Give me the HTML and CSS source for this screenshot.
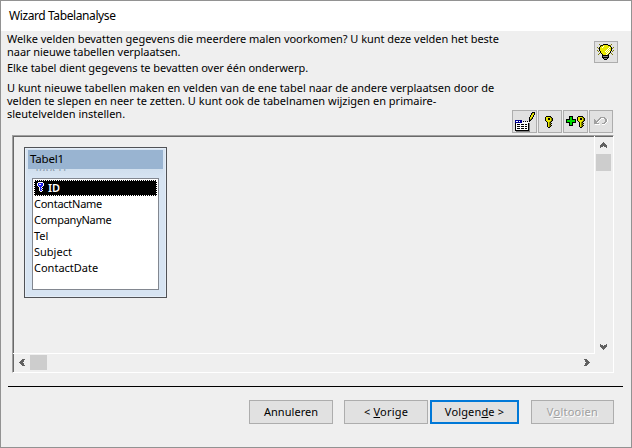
FILE: index.html
```html
<!DOCTYPE html>
<html lang="nl">
<head>
<meta charset="utf-8">
<title>Wizard Tabelanalyse</title>
<link rel="stylesheet" href="styles.css">
</head>
<body>
<div class="window">
  <header class="titlebar">Wizard Tabelanalyse</header>
  <main class="content">
    <section class="intro">
      <div class="copy">
        <p><span class="snug">Welke velden bevatten gegevens die meerdere malen voorkomen? U kunt deze velden het beste</span><br><span class="snug">naar nieuwe tabellen verplaatsen.</span></p>
        <p><span class="snug">Elke tabel dient gegevens te bevatten over één onderwerp.</span></p>
        <p>U kunt nieuwe tabellen maken en velden van de ene tabel naar de andere verplaatsen door de<br>velden te slepen en neer te zetten. U kunt ook de tabelnamen wijzigen en primaire-<br>sleutelvelden instellen.</p>
      </div>
      <div class="tools">
        <button class="tool tip" aria-label="Tip"><svg data-icon="bulb"></svg></button>
        <div class="toolbar">
          <button class="tool wide" aria-label="Naam wijzigen"><svg data-icon="rename"></svg></button>
          <button class="tool key" aria-label="Sleutel"><svg data-icon="key"></svg></button>
          <button class="tool wide" aria-label="Sleutel toevoegen"><svg data-icon="addkey"></svg></button>
          <button class="tool undo" aria-label="Ongedaan maken"><svg data-icon="undo"></svg></button>
        </div>
      </div>
    </section>
    <section class="panel">
      <div class="canvas">
        <div class="table">
          <div class="table-title">Tabel1</div>
          <div class="ghost"><span>Tabel1</span></div>
          <ul class="fields">
            <li class="selected"><svg data-icon="pk"></svg><span>ID</span></li>
            <li class="tight">ContactName</li>
            <li class="tight">CompanyName</li>
            <li>Tel</li>
            <li>Subject</li>
            <li>ContactDate</li>
          </ul>
        </div>
      </div>
      <div class="vscroll"><svg data-icon="up"></svg><i class="thumb"></i><svg class="last" data-icon="down"></svg></div>
      <div class="hscroll"><svg data-icon="left"></svg><i class="thumb"></i><svg class="last" data-icon="right"></svg></div>
    </section>
    <hr>
    <footer class="actions">
      <button class="btn cancel"><span>Annuleren</span></button>
      <button class="btn back"><span>&lt; <u>V</u>orige</span></button>
      <button class="btn next"><span>Volgen<u>d</u>e &gt;</span></button>
      <button class="btn finish" disabled><span>V<u>o</u>ltooien</span></button>
    </footer>
  </main>
</div>
<script src="icons.js"></script>
</body>
</html>
```
FILE: styles.css
```css
* { box-sizing: border-box; }
body {
  margin: 0;
  font: 11px/13px "Noto Sans", "Open Sans", sans-serif;
  color: #000;
}
.window {
  width: 632px;
  height: 448px;
  border: 1px solid #929292;
  background: #efefef;
  overflow: hidden;
}
.titlebar {
  height: 30px;
  padding: 1px 8px 0;
  background: #fff;
  font-size: 12px;
  line-height: 28px;
  letter-spacing: -.4px;
}
.content { display: flex; flex-direction: column; }
.intro { display: flex; height: 104px; }
.copy { width: 511px; padding: 1px 0 0 6px; white-space: nowrap; }
p { margin: 0 0 3px; }
p + p { margin-bottom: 7px; }
.snug { letter-spacing: -.045px; }
.tools { width: 102px; padding-top: 10px; }
button { padding: 0; margin: 0; font: inherit; color: #000; background: #e1e1e1; border: 1px solid #adadad; }
.tool { display: flex; align-items: center; justify-content: center; width: 24px; height: 23px; }
.wide { width: 25px; }
.key { padding-right: 3px; }
.undo { padding: 0 1px 2px 0; }
.tip { height: 22px; margin-left: 82px; padding-right: 1px; }
.toolbar { display: flex; gap: 1px; margin-top: 47px; }
.panel {
  display: grid;
  grid-template: 218px 17px / 582px 18px;
  width: 602px;
  height: 238px;
  margin-left: 11px;
  border: 1px solid;
  border-color: #a0a0a0 #fff #fff #a0a0a0;
  box-shadow: inset 1px 1px #696969;
}
.canvas { padding: 11px 0 0 11px; border: solid #fff; border-width: 0 1px 1px 0; box-shadow: inset 1px 1px #696969; }
.table {
  width: 143px;
  height: 151px;
  padding: 2px 3px;
  border: 1px solid #505256;
  background: #d7e4f2;
  box-shadow: inset 1px 1px #e4edf7, inset -1px -1px #e4edf7;
}
.table-title {
  height: 19px;
  padding-left: 2px;
  background: #99b4d1;
  font-size: 11.5px;
  line-height: 18px;
  letter-spacing: -.2px;
}
.ghost {
  height: 9px;
  padding-left: 6px;
  background: linear-gradient(#d0dfee, #d7e4f2);
}
.ghost span { display: flex; align-items: flex-end; height: 2px; line-height: 7px; overflow: hidden; color: #8f9dad; }
.fields {
  width: 127px;
  height: 112px;
  margin: 0 0 0 4px;
  padding: 1px;
  list-style: none;
  background: #fff;
  border: 1px solid #828790;
  line-height: 15px;
}
.fields li { height: 16px; }
.fields .tight { letter-spacing: -.25px; }
.fields .selected {
  display: flex;
  gap: 3px;
  padding: 1px 0 0 2px;
  width: 123px;
  line-height: 12px;
  font-weight: 600;
  color: #fff;
  background: #000;
  border: 1px dotted #fff;
}
.vscroll { display: flex; flex-direction: column; align-items: center; padding: 6px 2px 4px 0; }
.hscroll { display: flex; align-items: center; padding: 0 5px 1px 6px; box-shadow: inset 1px 0 #696969; }
.thumb { background: #cdcdcd; }
.vscroll .thumb { width: 15px; height: 17px; margin-top: 6px; }
.hscroll .thumb { width: 17px; height: 15px; margin-left: 5px; }
.vscroll .last { margin-top: auto; }
.hscroll .last { margin-left: auto; }
hr { width: 615px; height: 1px; margin: 13px 0 13px 7px; border: 0; background: #000; }
.actions { display: flex; padding-left: 248px; }
.btn { width: 84px; height: 24px; line-height: 20px; letter-spacing: .05px; }
.back { margin-left: 11px; letter-spacing: .2px; }
.next { width: 89px; margin-left: 2px; border: 2px solid #0078d7; line-height: 18px; letter-spacing: .15px; }
.finish { width: 83px; margin-left: 12px; color: #a0a0a0; text-shadow: 1px 1px #fff; letter-spacing: .25px; }
svg { display: block; flex: none; }
```
FILE: icons.js
```js
// Each icon is a pixel map; every letter is a palette colour.
const palette = { K: '#000', Y: '#e8e800', y: '#808000', W: '#fff', G: '#00d800', B: '#000090', g: '#a0a0a0', b: '#2020f0', s: '#808080', a: '#606060' };
const icons = {
  bulb: [
    '  y   KKKKK   y  ',
    '   yKKYYYYYKKy   ',
    '   KYYWYYYYYYK   ',
    'y KYYWYYYYYYWYK y',
    ' yKYYYYYYYYWYYKy ',
    '  KYYYYYYYWYWYK  ',
    'y KYYYYYYWYWYYK y',
    ' y KYYYYWYWYWK y ',
    '   KYYYYYWYWYK   ',
    '  y KYYYYYWYK y  ',
    ' y   KYYYWYK   y ',
    '     KKKKKKK     ',
    '     KsssssK     ',
    '     KKKKKKK     ',
    '      KsssK      ',
    '       KKK       '],
  rename: [
    '                 KKK',
    '                KyYK',
    '                KYYK',
    '               KYYK ',
    '               KYYK ',
    '              KYYK  ',
    '              KYyK  ',
    '              KyK   ',
    'BBBBBBB       KK    ',
    'BWWBWBB K K K K     ',
    'BBBBBBBWWWWWWW      ',
    'KWWWWWWWWWWWWKs     ',
    'KWKKKWKKKWKKWKs     ',
    'KWWWWWWWWWWWWKs     ',
    'KWKKKWKKKWKKWKs     ',
    'KWWWWWWWWWWWWKs     ',
    'KWKKKWKKKWKKWKs     ',
    'KWWWWWWWWWWWWKs     ',
    'KKKKKKKKKKKKKKs     ',
    ' ssssssssssssss     '],
  key: [
    ' KKKKK  ',
    'KYYYYyK ',
    'KYYKKYyK',
    'KYYKKYyK',
    'KYYYYYyK',
    ' KYYYyK ',
    '  KYyK  ',
    '  KYyyK ',
    '  KYyK  ',
    '  KYyyK ',
    '  KYyK  ',
    '   KK   '],
  addkey: [
    '   KKKK     KKKKK  ',
    '   KGGK    KYYYYyK ',
    '   KGGK    KYYKKYyK',
    'KKKKGGKKKK KYYKKYyK',
    'KGGGGGGGGK KYYYYYyK',
    'KGGGGGGGGK  KYYYyK ',
    'KKKKGGKKKK   KYyK  ',
    '   KGGK      KYyyK ',
    '   KGGK      KYyK  ',
    '   KKKK      KYyyK ',
    '             KYyK  ',
    '              KK   '],
  undo: [
    '      ggggg   ',
    '     ggWWWgg  ',
    'g   ggW    ggW',
    'gg ggW     ggW',
    'ggggW      ggW',
    'gggW      ggW ',
    'ggggg   gggW  ',
    ' WWWWW  WWW   '],
  pk: [
    ' WWWWW  ',
    'WbbbbbW ',
    'WbWWbbW ',
    'WbbbbbW ',
    ' WbbbW  ',
    '  WbW   ',
    '  WbbW  ',
    '  WbW   ',
    '  WbbW  ',
    '   WW   '],
  up: ['   a   ', '  aaa  ', ' aaaaa ', 'aaaaaaa', 'aaa aaa', 'a     a'],
  down: ['a     a', 'aaa aaa', 'aaaaaaa', ' aaaaa ', '  aaa  ', '   a   '],
  left: ['   aaa', '  aaa ', ' aaaa ', 'aaaa  ', ' aaaa ', '  aaa ', '   aaa'],
  right: ['aaa   ', ' aaa  ', ' aaaa ', '  aaaa', ' aaaa ', ' aaa  ', 'aaa   ']
};
document.querySelectorAll('svg[data-icon]').forEach(svg => {
  const rows = icons[svg.dataset.icon];
  svg.setAttribute('width', rows[0].length);
  svg.setAttribute('height', rows.length);
  svg.setAttribute('shape-rendering', 'crispEdges');
  const paths = {};
  rows.forEach((row, y) => [...row].forEach((c, x) => {
    if (c !== ' ') paths[c] = (paths[c] || '') + `M${x} ${y}h1v1h-1z`;
  }));
  svg.innerHTML = Object.entries(paths).map(([c, d]) => `<path fill="${palette[c]}" d="${d}"/>`).join('');
});
```
